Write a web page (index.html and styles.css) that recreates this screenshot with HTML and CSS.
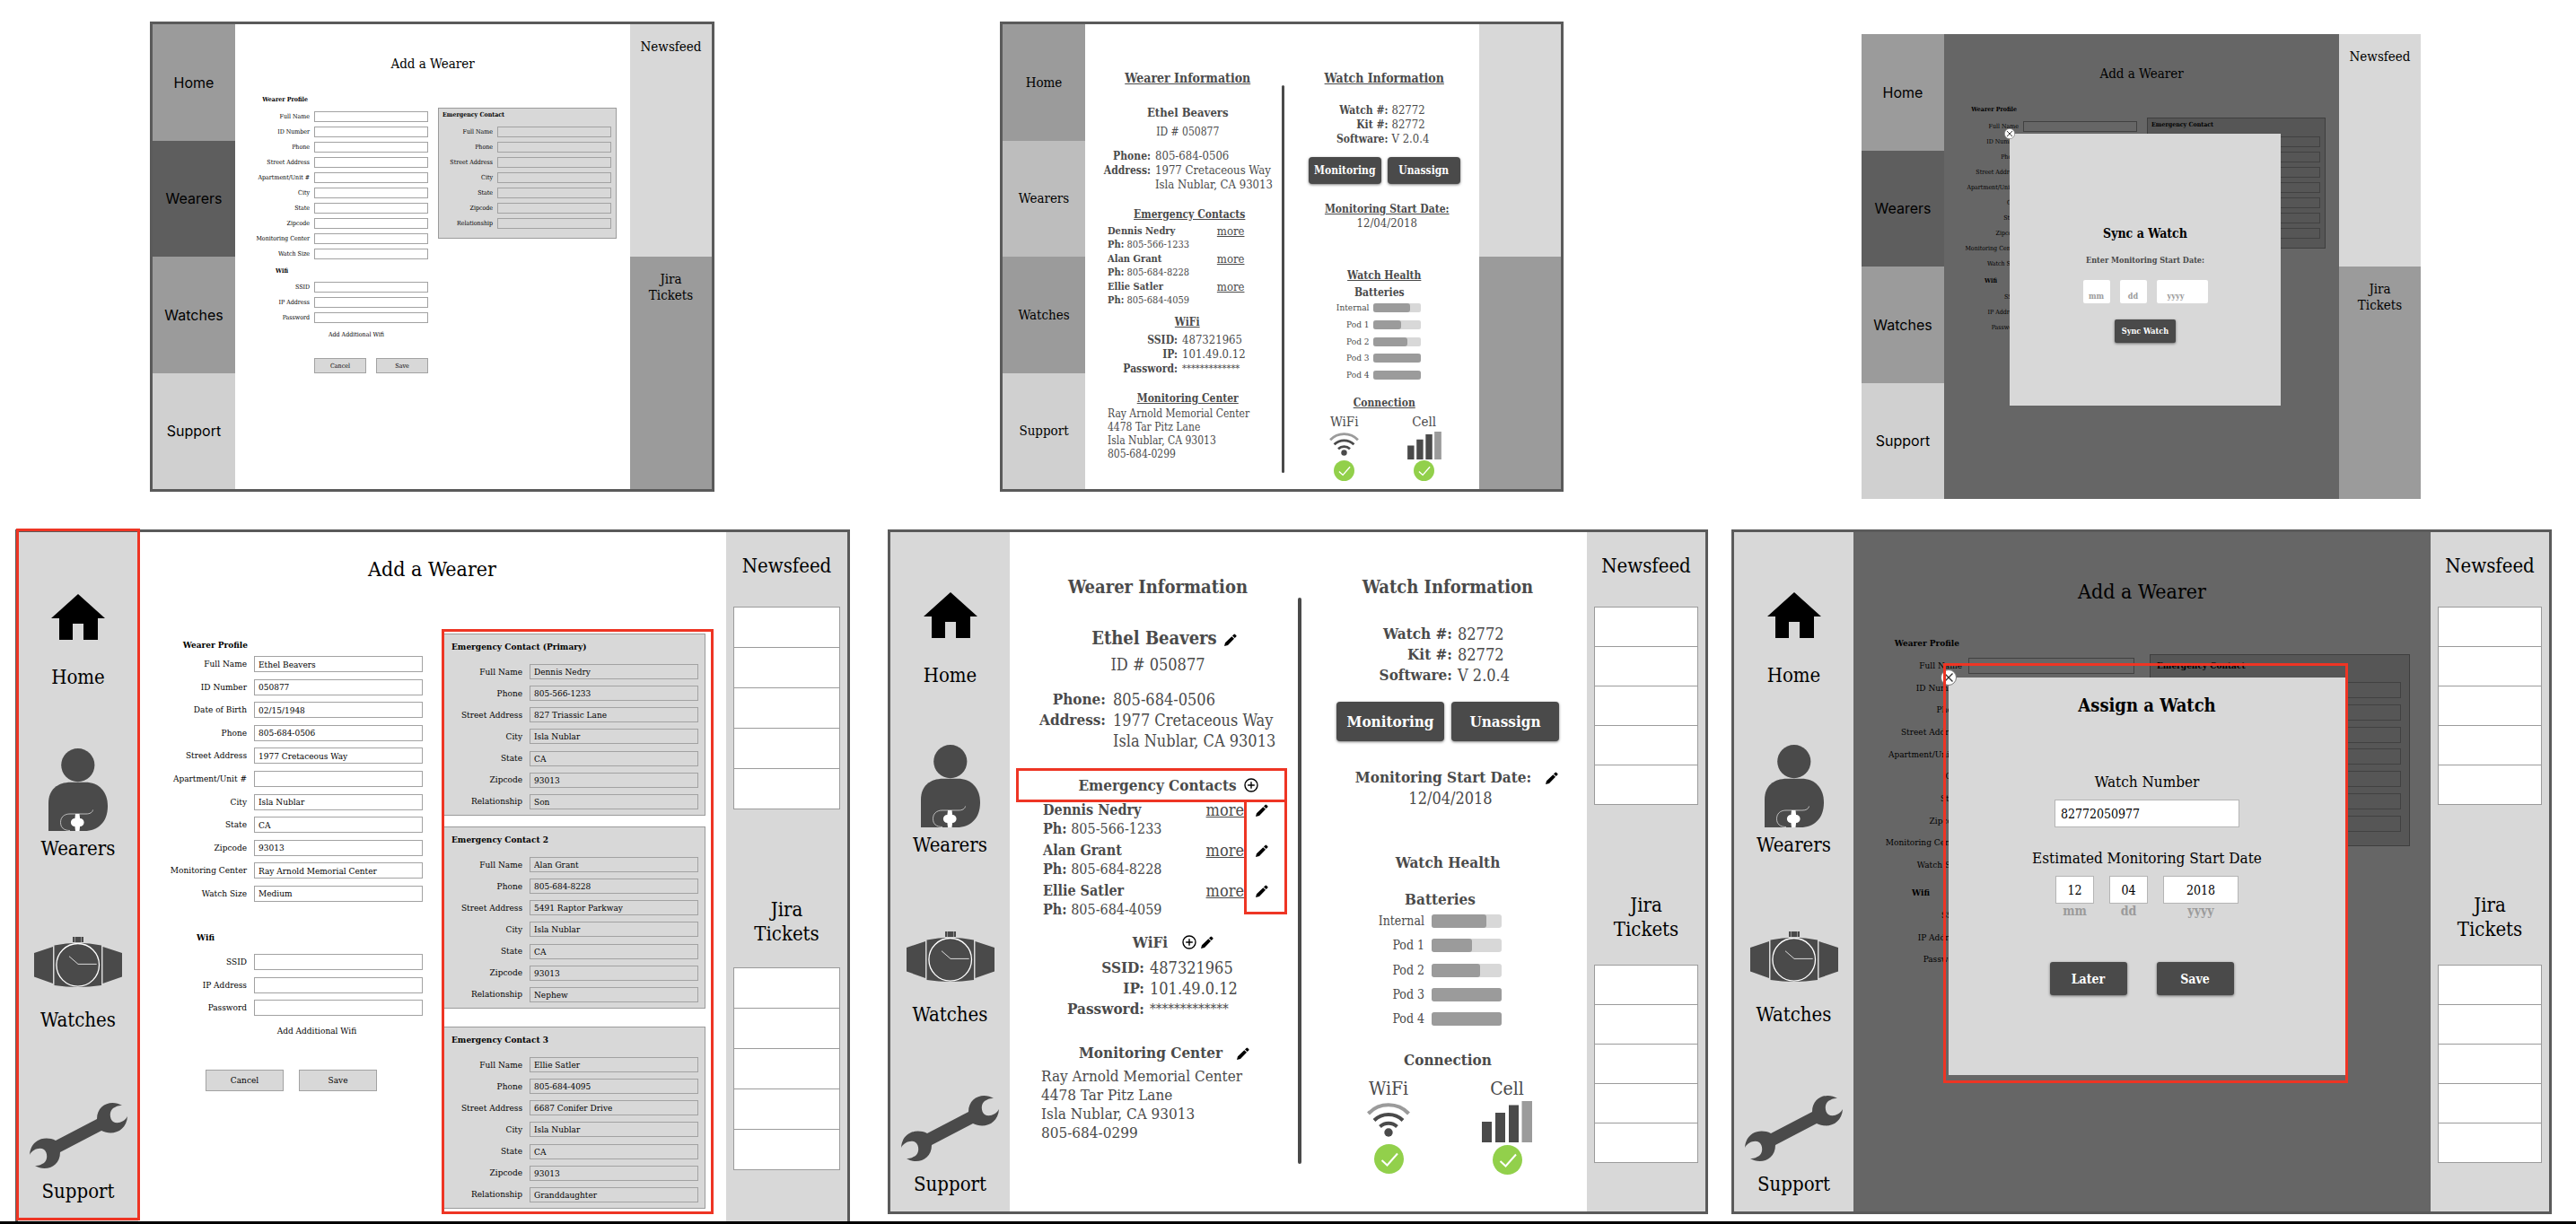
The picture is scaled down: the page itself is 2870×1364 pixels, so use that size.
FILE: index.html
```html
<!DOCTYPE html>
<html lang="en">
<head>
<meta charset="utf-8">
<title>Wearer screens</title>
<link rel="stylesheet" href="styles.css">
</head>
<body>
<svg class="sprite" aria-hidden="true">
  <symbol id="i-home" viewBox="0 0 60 51"><path d="M30 0 60 27H52V51H36V33H24V51H9V27H0Z" fill="#000"/></symbol>
  <symbol id="i-wearer" viewBox="0 0 66 92">
    <circle cx="32.8" cy="18.6" r="18.6"/>
    <path d="M0 92V61C0 46 10 37.8 25 37.8H41C56 37.8 66 48 66 64.500C66 82 55 92 40 92Z"/>
    <path d="M49.500 68.500C49 71.500 46 73 42 73H24C17 73 13.500 77 13.500 82.500S17 91.500 24 91.500" fill="none" stroke="#d8d8d8" stroke-width=".8"/>
    <path d="M30 73h4.500l.6 5a4.500 4.500 0 0 1 0 9l-.6 5H30l-.6-5a4.500 4.500 0 0 1 0-9Z" fill="#fff"/>
  </symbol>
  <symbol id="i-watch" viewBox="0 0 98 56">
    <path d="M0 18 21 11V52L0 44.500ZM98 18 76.500 11V52L98 44.500ZM22.500 9.500Q48.700 4 75 9.500V54Q48.700 58 22.500 54ZM43 0H55V6H43Z"/>
    <path d="M45.500 0V6M52.500 0V6" stroke="#d8d8d8" stroke-width=".5"/>
    <circle cx="48.700" cy="31.300" r="23.800" fill="none" stroke="#fff" stroke-width="1.300"/>
    <path d="M39 21.700 49 30.400H69.700" fill="none" stroke="#fff" stroke-width=".8"/>
  </symbol>
  <symbol id="i-wrench" viewBox="0 0 109 75"><path d="M103 4C92-3 75 2 75 19L29 43C17 37 1 42 0 59C3 53 11 50 16 53C21 57 20 67 14 69C11 71 8 71 6 71C17 78 34 73 34 56L80 32C92 38 108 33 109 16C106 22 98 25 93 22C88 18 89 8 95 6C98 4 101 4 103 4Z"/></symbol>
  <symbol id="i-pencil" viewBox="0 0 14 14"><path d="M0 14 1 10.200 8.300 3.200 11 5.800 4 12.900ZM9 2.500 10.600.9Q11.300.3 12 .9L13.300 2.100Q13.900 2.800 13.300 3.500L11.700 5.100Z" fill="#000"/></symbol>
  <symbol id="i-plus" viewBox="0 0 16 16"><path d="M8 4.200V11.800M4.200 8H11.800M15 8A7 7 0 1 1 1 8A7 7 0 1 1 15 8Z" fill="none" stroke="#000" stroke-width="1.400"/></symbol>
  <symbol id="i-close" viewBox="0 0 18 18"><circle cx="9" cy="9" r="8.500" fill="#fff" stroke="#777"/><path d="M4.500 4.500 13.500 13.500M13.500 4.500 4.500 13.500" stroke="#333" stroke-width="1.400"/></symbol>
  <symbol id="i-wifi" viewBox="0 0 48 38">
    <path d="M1.500 12A31 31 0 0 1 46.500 12" fill="none" stroke="#9b9b9b" stroke-width="4"/>
    <path d="M8 19.500A23 23 0 0 1 40 19.500M14.500 26.500A14 14 0 0 1 33.500 26.500" fill="none" stroke="#4a4a4a" stroke-width="4"/>
    <circle cx="24" cy="33" r="4.700"/>
  </symbol>
  <symbol id="i-cell" viewBox="0 0 56 46"><path d="M0 23H11V46H0ZM15 13H26V46H15ZM30 4.500H41V46H30Z"/><path d="M44.500 0H56V46H44.500Z" fill="#9b9b9b"/></symbol>
  <symbol id="i-check" viewBox="0 0 33 33"><circle cx="16.500" cy="16.500" r="16.500" fill="#92d04b"/><path d="M8.500 18 14.500 23.500 26 10.500" fill="none" stroke="#fff" stroke-width="2"/></symbol>
</svg>

<div class="row row-old">

  <!-- Add a wearer, first version -->
  <section class="screen screen-old s-a">
    <nav class="blocks sans">
      <a href="#">Home</a><a href="#" class="dark">Wearers</a><a href="#">Watches</a><a href="#" class="pale">Support</a>
    </nav>
    <main class="form-page compact">
      <h1>Add a Wearer</h1>
      <div class="columns">
        <form class="profile">
          <h2>Wearer Profile</h2>
          <div class="fields">
            <label><span>Full Name</span><input type="text"></label>
            <label><span>ID Number</span><input type="text"></label>
            <label><span>Phone</span><input type="text"></label>
            <label><span>Street Address</span><input type="text"></label>
            <label><span>Apartment/Unit #</span><input type="text"></label>
            <label><span>City</span><input type="text"></label>
            <label><span>State</span><input type="text"></label>
            <label><span>Zipcode</span><input type="text"></label>
            <label><span>Monitoring Center</span><input type="text"></label>
            <label><span>Watch Size</span><input type="text"></label>
          </div>
          <h2 class="wifi-title">Wifi</h2>
          <div class="fields wifi-fields">
            <label><span>SSID</span><input type="text"></label>
            <label><span>IP Address</span><input type="text"></label>
            <label><span>Password</span><input type="text"></label>
          </div>
          <a href="#" class="add-wifi">Add Additional Wifi</a>
          <div class="actions"><button type="button">Cancel</button><button type="button">Save</button></div>
        </form>
        <div class="contacts">
          <section class="panel">
            <h2>Emergency Contact</h2>
            <div class="fields">
              <label><span>Full Name</span><input type="text"></label>
              <label><span>Phone</span><input type="text"></label>
              <label><span>Street Address</span><input type="text"></label>
              <label><span>City</span><input type="text"></label>
              <label><span>State</span><input type="text"></label>
              <label><span>Zipcode</span><input type="text"></label>
              <label><span>Relationship</span><input type="text"></label>
            </div>
          </section>
        </div>
      </div>
    </main>
    <aside class="feed-old"><h2>Newsfeed</h2><h2>Jira<br>Tickets</h2></aside>
  </section>

  <!-- Wearer details, first version -->
  <section class="screen screen-old s-b">
    <nav class="blocks">
      <a href="#">Home</a><a href="#" class="mid">Wearers</a><a href="#">Watches</a><a href="#" class="pale">Support</a>
    </nav>
    <main class="details small">
      <section class="wearer">
        <h2>Wearer Information</h2>
        <p class="name">Ethel Beavers</p>
        <p class="id">ID # 050877</p>
        <dl class="pairs"><dt>Phone:</dt><dd>805-684-0506</dd><dt>Address:</dt><dd>1977 Cretaceous Way<br>Isla Nublar, CA 93013</dd></dl>
        <h3 class="t-contacts">Emergency Contacts</h3>
        <ul class="people">
          <li><p><b>Dennis Nedry</b><br><b>Ph:</b> 805-566-1233</p><a href="#">more</a></li>
          <li><p><b>Alan Grant</b><br><b>Ph:</b> 805-684-8228</p><a href="#">more</a></li>
          <li><p><b>Ellie Satler</b><br><b>Ph:</b> 805-684-4059</p><a href="#">more</a></li>
        </ul>
        <h3 class="t-wifi">WiFi</h3>
        <dl class="pairs network"><dt>SSID:</dt><dd>487321965</dd><dt>IP:</dt><dd>101.49.0.12</dd><dt>Password:</dt><dd class="secret">*************</dd></dl>
        <h3 class="t-center">Monitoring Center</h3>
        <p class="address">Ray Arnold Memorial Center<br>4478 Tar Pitz Lane<br>Isla Nublar, CA 93013<br>805-684-0299</p>
      </section>
      <div class="divider"></div>
      <section class="watch">
        <h2>Watch Information</h2>
        <dl class="pairs"><dt>Watch #:</dt><dd>82772</dd><dt>Kit #:</dt><dd>82772</dd><dt>Software:</dt><dd>V 2.0.4</dd></dl>
        <div class="buttons"><button type="button">Monitoring</button><button type="button">Unassign</button></div>
        <h3 class="t-start">Monitoring Start Date:</h3>
        <p class="date">12/04/2018</p>
        <h3 class="t-health">Watch Health</h3>
        <h4>Batteries</h4>
        <ul class="meters">
          <li><span>Internal</span><i><b style="width:77%"></b></i></li>
          <li><span>Pod 1</span><i><b style="width:58%"></b></i></li>
          <li><span>Pod 2</span><i><b style="width:70%"></b></i></li>
          <li><span>Pod 3</span><i><b style="width:100%"></b></i></li>
          <li><span>Pod 4</span><i><b style="width:100%"></b></i></li>
        </ul>
        <h3 class="t-connection">Connection</h3>
        <div class="signals">
          <div><span>WiFi</span><svg class="signal"><use href="#i-wifi"/></svg><svg class="check"><use href="#i-check"/></svg></div>
          <div><span>Cell</span><svg class="signal"><use href="#i-cell"/></svg><svg class="check"><use href="#i-check"/></svg></div>
        </div>
      </section>
    </main>
    <aside class="feed-old"><h2></h2><h2></h2></aside>
  </section>

  <!-- Sync a watch, first version -->
  <section class="screen screen-old s-c">
    <nav class="blocks sans">
      <a href="#">Home</a><a href="#" class="dark">Wearers</a><a href="#">Watches</a><a href="#" class="pale">Support</a>
    </nav>
    <main class="form-page compact">
      <h1>Add a Wearer</h1>
      <div class="columns">
        <form class="profile">
          <h2>Wearer Profile</h2>
          <div class="fields">
            <label><span>Full Name</span><input type="text"></label>
            <label><span>ID Number</span><input type="text"></label>
            <label><span>Phone</span><input type="text"></label>
            <label><span>Street Address</span><input type="text"></label>
            <label><span>Apartment/Unit #</span><input type="text"></label>
            <label><span>City</span><input type="text"></label>
            <label><span>State</span><input type="text"></label>
            <label><span>Zipcode</span><input type="text"></label>
            <label><span>Monitoring Center</span><input type="text"></label>
            <label><span>Watch Size</span><input type="text"></label>
          </div>
          <h2 class="wifi-title">Wifi</h2>
          <div class="fields wifi-fields">
            <label><span>SSID</span><input type="text"></label>
            <label><span>IP Address</span><input type="text"></label>
            <label><span>Password</span><input type="text"></label>
          </div>
        </form>
        <div class="contacts">
          <section class="panel">
            <h2>Emergency Contact</h2>
            <div class="fields">
              <label><span></span><input type="text" aria-label="Full Name"></label>
              <label><span></span><input type="text" aria-label="Phone"></label>
              <label><span></span><input type="text" aria-label="Street Address"></label>
              <label><span></span><input type="text" aria-label="City"></label>
              <label><span></span><input type="text" aria-label="State"></label>
              <label><span></span><input type="text" aria-label="Zipcode"></label>
              <label><span></span><input type="text" aria-label="Relationship"></label>
            </div>
          </section>
        </div>
      </div>
      <div class="scrim"></div>
      <div class="modal sync" role="dialog">
        <button type="button" class="close" aria-label="Close"><svg><use href="#i-close"/></svg></button>
        <h2>Sync a Watch</h2>
        <p>Enter Monitoring Start Date:</p>
        <div class="date-parts">
          <input type="text" placeholder="mm" aria-label="Month">
          <input type="text" placeholder="dd" aria-label="Day">
          <input type="text" class="year" placeholder="yyyy" aria-label="Year">
        </div>
        <div class="buttons"><button type="button">Sync Watch</button></div>
      </div>
    </main>
    <aside class="feed-old"><h2>Newsfeed</h2><h2>Jira<br>Tickets</h2></aside>
  </section>
</div>

<div class="row row-new">

  <!-- Add a wearer, revised -->
  <section class="screen screen-new s-d">
    <nav class="icons">
      <a href="#"><svg class="home"><use href="#i-home"/></svg>Home</a>
      <a href="#"><svg class="person"><use href="#i-wearer"/></svg>Wearers</a>
      <a href="#"><svg class="wristwatch"><use href="#i-watch"/></svg>Watches</a>
      <a href="#"><svg class="wrench"><use href="#i-wrench"/></svg>Support</a>
      <div class="mark mark-nav"></div>
    </nav>
    <main class="form-page">
      <h1>Add a Wearer</h1>
      <div class="columns">
        <form class="profile">
          <h2>Wearer Profile</h2>
          <div class="fields">
            <label><span>Full Name</span><input type="text" value="Ethel Beavers"></label>
            <label><span>ID Number</span><input type="text" value="050877"></label>
            <label><span>Date of Birth</span><input type="text" value="02/15/1948"></label>
            <label><span>Phone</span><input type="text" value="805-684-0506"></label>
            <label><span>Street Address</span><input type="text" value="1977 Cretaceous Way"></label>
            <label><span>Apartment/Unit #</span><input type="text"></label>
            <label><span>City</span><input type="text" value="Isla Nublar"></label>
            <label><span>State</span><input type="text" value="CA"></label>
            <label><span>Zipcode</span><input type="text" value="93013"></label>
            <label><span>Monitoring Center</span><input type="text" value="Ray Arnold Memorial Center"></label>
            <label><span>Watch Size</span><input type="text" value="Medium"></label>
          </div>
          <h2 class="wifi-title">Wifi</h2>
          <div class="fields wifi-fields">
            <label><span>SSID</span><input type="text"></label>
            <label><span>IP Address</span><input type="text"></label>
            <label><span>Password</span><input type="text"></label>
          </div>
          <a href="#" class="add-wifi">Add Additional Wifi</a>
          <div class="actions"><button type="button">Cancel</button><button type="button">Save</button></div>
        </form>
        <div class="contacts">
          <section class="panel">
            <h2>Emergency Contact (Primary)</h2>
            <div class="fields">
              <label><span>Full Name</span><input type="text" value="Dennis Nedry"></label>
              <label><span>Phone</span><input type="text" value="805-566-1233"></label>
              <label><span>Street Address</span><input type="text" value="827 Triassic Lane"></label>
              <label><span>City</span><input type="text" value="Isla Nublar"></label>
              <label><span>State</span><input type="text" value="CA"></label>
              <label><span>Zipcode</span><input type="text" value="93013"></label>
              <label><span>Relationship</span><input type="text" value="Son"></label>
            </div>
          </section>
          <section class="panel">
            <h2>Emergency Contact 2</h2>
            <div class="fields">
              <label><span>Full Name</span><input type="text" value="Alan Grant"></label>
              <label><span>Phone</span><input type="text" value="805-684-8228"></label>
              <label><span>Street Address</span><input type="text" value="5491 Raptor Parkway"></label>
              <label><span>City</span><input type="text" value="Isla Nublar"></label>
              <label><span>State</span><input type="text" value="CA"></label>
              <label><span>Zipcode</span><input type="text" value="93013"></label>
              <label><span>Relationship</span><input type="text" value="Nephew"></label>
            </div>
          </section>
          <section class="panel">
            <h2>Emergency Contact 3</h2>
            <div class="fields">
              <label><span>Full Name</span><input type="text" value="Ellie Satler"></label>
              <label><span>Phone</span><input type="text" value="805-684-4095"></label>
              <label><span>Street Address</span><input type="text" value="6687 Conifer Drive"></label>
              <label><span>City</span><input type="text" value="Isla Nublar"></label>
              <label><span>State</span><input type="text" value="CA"></label>
              <label><span>Zipcode</span><input type="text" value="93013"></label>
              <label><span>Relationship</span><input type="text" value="Granddaughter"></label>
            </div>
          </section>
          <div class="mark mark-contacts"></div>
        </div>
      </div>
    </main>
    <aside class="feed">
      <h2>Newsfeed</h2><ul><li></li><li></li><li></li><li></li><li></li></ul>
      <h2>Jira<br>Tickets</h2><ul><li></li><li></li><li></li><li></li><li></li></ul>
    </aside>
  </section>

  <!-- Wearer details, revised -->
  <section class="screen screen-new s-e">
    <nav class="icons">
      <a href="#"><svg class="home"><use href="#i-home"/></svg>Home</a>
      <a href="#"><svg class="person"><use href="#i-wearer"/></svg>Wearers</a>
      <a href="#"><svg class="wristwatch"><use href="#i-watch"/></svg>Watches</a>
      <a href="#"><svg class="wrench"><use href="#i-wrench"/></svg>Support</a>
    </nav>
    <main class="details">
      <section class="wearer">
        <h2>Wearer Information</h2>
        <p class="name">Ethel Beavers<span class="tools"><button type="button" aria-label="Edit name"><svg><use href="#i-pencil"/></svg></button></span></p>
        <p class="id">ID # 050877</p>
        <dl class="pairs"><dt>Phone:</dt><dd>805-684-0506</dd><dt>Address:</dt><dd>1977 Cretaceous Way<br>Isla Nublar, CA 93013</dd></dl>
        <h3 class="t-contacts">Emergency Contacts<span class="tools"><button type="button" aria-label="Add contact"><svg class="plus"><use href="#i-plus"/></svg></button></span><span class="mark mark-title"></span></h3>
        <ul class="people">
          <li><p><b>Dennis Nedry</b><br><b>Ph:</b> 805-566-1233</p><a href="#">more</a><button type="button" aria-label="Edit Dennis Nedry"><svg><use href="#i-pencil"/></svg></button></li>
          <li><p><b>Alan Grant</b><br><b>Ph:</b> 805-684-8228</p><a href="#">more</a><button type="button" aria-label="Edit Alan Grant"><svg><use href="#i-pencil"/></svg></button></li>
          <li><p><b>Ellie Satler</b><br><b>Ph:</b> 805-684-4059</p><a href="#">more</a><button type="button" aria-label="Edit Ellie Satler"><svg><use href="#i-pencil"/></svg></button></li>
          <li class="mark mark-edit"></li>
        </ul>
        <h3 class="t-wifi">WiFi<span class="tools wide"><button type="button" aria-label="Add network"><svg class="plus"><use href="#i-plus"/></svg></button><button type="button" aria-label="Edit network"><svg><use href="#i-pencil"/></svg></button></span></h3>
        <dl class="pairs network"><dt>SSID:</dt><dd>487321965</dd><dt>IP:</dt><dd>101.49.0.12</dd><dt>Password:</dt><dd class="secret">*************</dd></dl>
        <h3 class="t-center">Monitoring Center<span class="tools wide"><button type="button" aria-label="Edit center"><svg><use href="#i-pencil"/></svg></button></span></h3>
        <p class="address">Ray Arnold Memorial Center<br>4478 Tar Pitz Lane<br>Isla Nublar, CA 93013<br>805-684-0299</p>
      </section>
      <div class="divider"></div>
      <section class="watch">
        <h2>Watch Information</h2>
        <dl class="pairs"><dt>Watch #:</dt><dd>82772</dd><dt>Kit #:</dt><dd>82772</dd><dt>Software:</dt><dd>V 2.0.4</dd></dl>
        <div class="buttons"><button type="button">Monitoring</button><button type="button">Unassign</button></div>
        <h3 class="t-start">Monitoring Start Date:<span class="tools wide"><button type="button" aria-label="Edit start date"><svg><use href="#i-pencil"/></svg></button></span></h3>
        <p class="date">12/04/2018</p>
        <h3 class="t-health">Watch Health</h3>
        <h4>Batteries</h4>
        <ul class="meters">
          <li><span>Internal</span><i><b style="width:78%"></b></i></li>
          <li><span>Pod 1</span><i><b style="width:58%"></b></i></li>
          <li><span>Pod 2</span><i><b style="width:69%"></b></i></li>
          <li><span>Pod 3</span><i><b style="width:100%"></b></i></li>
          <li><span>Pod 4</span><i><b style="width:100%"></b></i></li>
        </ul>
        <h3 class="t-connection">Connection</h3>
        <div class="signals">
          <div><span>WiFi</span><svg class="signal"><use href="#i-wifi"/></svg><svg class="check"><use href="#i-check"/></svg></div>
          <div><span>Cell</span><svg class="signal"><use href="#i-cell"/></svg><svg class="check"><use href="#i-check"/></svg></div>
        </div>
      </section>
    </main>
    <aside class="feed">
      <h2>Newsfeed</h2><ul><li></li><li></li><li></li><li></li><li></li></ul>
      <h2>Jira<br>Tickets</h2><ul><li></li><li></li><li></li><li></li><li></li></ul>
    </aside>
  </section>

  <!-- Assign a watch, revised -->
  <section class="screen screen-new s-f">
    <nav class="icons">
      <a href="#"><svg class="home"><use href="#i-home"/></svg>Home</a>
      <a href="#"><svg class="person"><use href="#i-wearer"/></svg>Wearers</a>
      <a href="#"><svg class="wristwatch"><use href="#i-watch"/></svg>Watches</a>
      <a href="#"><svg class="wrench"><use href="#i-wrench"/></svg>Support</a>
    </nav>
    <main class="form-page backdrop">
      <h1>Add a Wearer</h1>
      <div class="columns">
        <form class="profile">
          <h2>Wearer Profile</h2>
          <div class="fields">
            <label><span>Full Name</span><input type="text"></label>
            <label><span>ID Number</span><input type="text"></label>
            <label><span>Phone</span><input type="text"></label>
            <label><span>Street Address</span><input type="text"></label>
            <label><span>Apartment/Unit #</span><input type="text"></label>
            <label><span>City</span><input type="text"></label>
            <label><span>State</span><input type="text"></label>
            <label><span>Zipcode</span><input type="text"></label>
            <label><span>Monitoring Center</span><input type="text"></label>
            <label><span>Watch Size</span><input type="text"></label>
          </div>
          <h2 class="wifi-title">Wifi</h2>
          <div class="fields wifi-fields">
            <label><span>SSID</span><input type="text"></label>
            <label><span>IP Address</span><input type="text"></label>
            <label><span>Password</span><input type="text"></label>
          </div>
        </form>
        <div class="contacts">
          <section class="panel">
            <h2>Emergency Contact</h2>
            <div class="fields">
              <label><span></span><input type="text" aria-label="Full Name"></label>
              <label><span></span><input type="text" aria-label="Phone"></label>
              <label><span></span><input type="text" aria-label="Street Address"></label>
              <label><span></span><input type="text" aria-label="City"></label>
              <label><span></span><input type="text" aria-label="State"></label>
              <label><span></span><input type="text" aria-label="Zipcode"></label>
              <label><span></span><input type="text" aria-label="Relationship"></label>
            </div>
          </section>
        </div>
      </div>
      <div class="scrim"></div>
      <div class="modal assign" role="dialog">
        <button type="button" class="close" aria-label="Close"><svg><use href="#i-close"/></svg></button>
        <h2>Assign a Watch</h2>
        <label for="watch-number">Watch Number</label>
        <input type="text" id="watch-number" value="82772050977">
        <p>Estimated Monitoring Start Date</p>
        <div class="date-parts">
          <label><input type="text" value="12">mm</label>
          <label><input type="text" value="04">dd</label>
          <label><input type="text" class="year" value="2018">yyyy</label>
        </div>
        <div class="buttons"><button type="button">Later</button><button type="button">Save</button></div>
      </div>
      <div class="mark mark-modal"></div>
    </main>
    <aside class="feed">
      <h2>Newsfeed</h2><ul><li></li><li></li><li></li><li></li><li></li></ul>
      <h2>Jira<br>Tickets</h2><ul><li></li><li></li><li></li><li></li><li></li></ul>
    </aside>
  </section>
</div>
<hr class="page-end">
</body>
</html>
```
FILE: styles.css
```css
* { box-sizing: border-box; }

body {
  margin: 0;
  padding-top: 24px;
  background: #fff;
  color: #000;
  font-family: "DejaVu Serif Condensed", "DejaVu Serif", serif;
}

h1, h2, h3, h4, p, ul, dl, dd { margin: 0; padding: 0; font-weight: normal; }
ul { list-style: none; }
a { color: inherit; text-decoration: none; }
input, button { margin: 0; padding: 0; border: 0; border-radius: 0; font: inherit; color: inherit; min-width: 0; }
button { background: none; }
svg { display: block; fill: #4a4a4a; }
.sprite { position: absolute; width: 0; height: 0; }

/* Canvas rows */
.row { display: grid; align-items: start; }
.row-old { grid-template-columns: 167fr 629fr 318fr 628fr 332fr 623fr 173fr; margin-bottom: 34px; }
.row-new { grid-template-columns: 17fr 930fr 42fr 914fr 26fr 914fr 27fr; }
.s-a, .s-d { grid-column: 2; }
.s-b, .s-e { grid-column: 4; }
.s-c, .s-f { grid-column: 6; }
.page-end { height: 3px; margin: 0; border: 0; background: #000; }

.screen { display: grid; border: 3px solid #5a5a5a; background: #fff; }
.screen-old { grid-template-columns: 92px 1fr 91px; min-height: 524px; }
.s-c { margin-top: 14px; min-height: 518px; border: 0; }
.screen-new { grid-template-columns: 133px 1fr 132px; min-height: 763px; }
.s-d { grid-template-columns: 134px 1fr 135px; min-height: 771px; border-bottom: 0; }

/* Block navigation */
.blocks { display: grid; grid-auto-rows: 1fr; font-size: 15px; }
.blocks a { display: flex; align-items: center; justify-content: center; background: #9b9b9b; }
.blocks .dark { background: #5e5e5e; }
.blocks .mid { background: #bdbdbd; }
.blocks .pale { background: #d0d0d0; }
.sans { font-family: Inter, sans-serif; font-size: 16px; }

.feed-old { display: grid; grid-auto-rows: 1fr; text-align: center; font-size: 15px; line-height: 18px; }
.feed-old h2 { font-size: 15px; padding-top: 16px; background: #d8d8d8; }
.feed-old h2 + h2 { background: #9b9b9b; }

/* Icon navigation */
.icons { --step: 189px; position: relative; background: #d8d8d8; font-size: 22px; line-height: 28px; }
.icons a { display: flex; flex-direction: column; align-items: center; justify-content: flex-end; height: var(--step); }
.icons a:first-child { height: calc(var(--step) - 15px); }
.icons .home { width: 60px; height: 51px; margin-bottom: 28px; }
.icons .person { width: 66px; height: 92px; margin-bottom: 6px; }
.icons .wristwatch { width: 98px; height: 56px; margin-bottom: 23px; }
.icons .wrench { width: 109px; height: 75px; margin-bottom: 11px; }
.s-d .icons { --step: 191px; }

.feed { --cell: 44px; padding: 24px 8px 0; background: #d8d8d8; text-align: center; }
.feed h2 { font-size: 22px; line-height: 27px; }
.feed ul { margin-top: 32px; border: 1px solid #9b9b9b; border-bottom: 0; }
.feed ul + h2 { margin-top: 98px; }
.feed h2 + ul ~ ul { margin-top: 26px; }
.feed li { height: var(--cell); border-bottom: 1px solid #9b9b9b; background: #fff; }
.s-d .feed { --cell: 45px; }
.s-d .feed h2 + ul ~ ul { margin-top: 24px; }

/* Review marks */
.mark { position: absolute; border: 3px solid #ee3524; pointer-events: none; }
.mark-nav { inset: -4px -2px 1px -2px; }
.mark-contacts { inset: -5px -9px -6px 0; }
.mark-title { inset: -7px 12px -7px 7px; }
.mark-edit { top: -1px; right: 12px; bottom: 5px; width: 48px; }
.mark-modal { inset: 146px 92px auto 100px; height: 468px; }

/* Add a wearer */
.form-page {
  --input-w: 188px; --input-h: 18px; --gap: 8px;
  position: relative;
  padding-top: 27px;
  font-size: 10px;
  line-height: 12px;
}
.form-page h1 { font-size: 23px; line-height: 28px; text-align: center; }
.form-page h2 { font-size: 10px; font-weight: bold; line-height: 12px; }
.columns { display: grid; grid-template-columns: 1fr 294px; column-gap: 21px; padding-right: 23px; align-items: start; }
.profile { padding-top: 65px; }
.profile h2 { padding-right: 195px; text-align: right; }
.profile .wifi-title { margin-top: 34px; padding-right: 232px; }
.fields { display: grid; align-content: space-between; height: 274px; margin-top: 6px; }
.fields label { display: grid; grid-template-columns: 1fr var(--input-w); column-gap: var(--gap); align-items: center; text-align: right; white-space: nowrap; }
.fields input { width: 100%; height: var(--input-h); padding: 0 4px; border: 1px solid #a2a2a2; background: #fff; }
.wifi-fields { height: 69px; margin-top: 12px; }
.add-wifi { display: block; margin-top: 11px; padding-left: 81px; text-align: center; }
.actions { display: flex; justify-content: flex-end; gap: 17px; margin-top: 37px; padding-right: 51px; }
.actions button { width: 87px; height: 24px; border: 1px solid #a2a2a2; background: #d8d8d8; }
.contacts { position: relative; margin-top: 58px; }
.panel { --input-h: 17px; padding: 8px 7px 6px 10px; border: 1px solid #9b9b9b; background: #d8d8d8; }
.panel + .panel { margin-top: 12px; }
.panel + .panel + .panel { margin-top: 20px; }
.panel .fields { height: 162px; margin-top: 13px; }
.panel input { background: transparent; }

.compact { --input-w: 127px; --input-h: 12px; --gap: 5px; padding-top: 34px; font-size: 7px; line-height: 8px; }
.compact h1 { font-size: 15px; line-height: 20px; }
.compact h2 { font-size: 7px; line-height: 8px; }
.compact .columns { grid-template-columns: 1fr 199px; column-gap: 11px; padding-right: 15px; }
.compact .profile { padding-top: 26px; }
.compact .profile h2 { padding-right: 134px; }
.compact .profile .wifi-title { margin-top: 9px; padding-right: 156px; }
.compact .fields { height: 165px; margin-top: 9px; }
.compact .wifi-fields { height: 46px; margin-top: 8px; }
.compact .add-wifi { margin-top: 9px; padding-left: 55px; }
.compact .actions { gap: 11px; margin-top: 22px; padding-right: 0; }
.compact .actions button { width: 58px; height: 17px; }
.compact .contacts { margin-top: 39px; }
.compact .panel { --input-h: 12px; padding: 3px 5px 10px 4px; }
.compact .panel .fields { height: 114px; margin-top: 9px; }

.backdrop { --input-w: 185px; --gap: 7px; padding-top: 52px; }
.backdrop .columns { grid-template-columns: 1fr 290px; column-gap: 17px; }
.backdrop .profile { padding-top: 38px; }
.backdrop .fields { height: 240px; margin-top: 10px; }
.backdrop .profile .wifi-title { margin-top: 16px; padding-right: 228px; }
.backdrop .wifi-fields { height: 67px; margin-top: 10px; }
.backdrop .contacts { margin-top: 56px; }
.backdrop .panel { --input-h: 18px; padding: 6px 9px 15px 7px; }
.backdrop .panel .fields { height: 167px; margin-top: 12px; }

/* Dialogs */
.scrim { position: absolute; inset: 0; background: rgba(0, 0, 0, .6); }
.modal { position: absolute; display: flex; flex-direction: column; align-items: center; background: #d8d8d8; }
.close { position: absolute; }
.close svg { width: 100%; height: 100%; }
.date-parts { display: flex; }
.date-parts input { background: #fff; text-align: center; }
.buttons { display: flex; justify-content: center; }
.buttons button { border-radius: 4px; background: #4a4a4a; color: #fff; font-weight: bold; box-shadow: 0 1px 3px rgba(0, 0, 0, .5); }

.sync { inset: 111px 65px auto 73px; height: 303px; padding-top: 101px; }
.sync .close { left: -6px; top: -6px; width: 12px; height: 12px; }
.sync h2 { font-size: 14px; line-height: 20px; }
.sync p { margin-top: 14px; color: #4a4a4a; font-size: 9px; font-weight: bold; line-height: 12px; }
.sync .date-parts { gap: 11px; margin-top: 16px; }
.sync .date-parts input { width: 30px; height: 26px; padding-top: 9px; border-radius: 2px; font-size: 9px; font-weight: bold; }
.sync .date-parts .year { width: 57px; padding-right: 14px; }
.sync ::placeholder { color: #9b9b9b; opacity: 1; }
.sync .buttons { margin-top: 18px; }
.sync .buttons button { width: 68px; height: 26px; border-radius: 2px; font-size: 9px; }

.assign { inset: 162px 95px auto 106px; height: 443px; padding-top: 17px; font-size: 17px; line-height: 24px; }
.assign .close { left: -9px; top: -9px; width: 18px; height: 18px; }
.assign h2 { margin-bottom: 59px; font-size: 20px; line-height: 28px; }
.assign > input { width: 206px; margin-top: 8px; padding: 0 6px; }
.assign input { height: 31px; border: 1px solid #b5b5b5; background: #fff; font-size: 14px; }
.assign p { margin-top: 22px; }
.assign .date-parts { gap: 17px; margin-top: 8px; }
.assign .date-parts label { display: flex; flex-direction: column; align-items: center; color: #9b9b9b; font-size: 14px; font-weight: bold; line-height: 16px; }
.assign .date-parts input { width: 43px; color: #000; font-weight: normal; }
.assign .date-parts .year { width: 84px; }
.assign .buttons { gap: 33px; margin-top: 49px; padding-right: 12px; }
.assign .buttons button { width: 86px; height: 37px; border-radius: 3px; font-size: 14px; }

/* Wearer and watch details */
.details { display: grid; grid-template-columns: 321fr 4px 318fr; color: #4a4a4a; font-size: 18px; line-height: 23px; text-align: center; white-space: nowrap; }
.details h2 { padding-top: 47px; font-size: 20px; font-weight: bold; line-height: 28px; }
.details h3, .details h4 { font-size: 17px; font-weight: bold; line-height: 24px; }
.wearer > h2, .wearer > h3, .name, .id { padding-left: 9px; }
.wearer > h3 { position: relative; }
.divider { margin: 73px 0 53px; border-radius: 2px; background: #4a4a4a; }
.name { margin-top: 29px; font-size: 20px; font-weight: bold; line-height: 28px; }
.id { margin-top: 4px; line-height: 24px; }
.pairs { display: grid; grid-template-columns: 107px 1fr; column-gap: 8px; margin-top: 15px; text-align: left; }
.pairs dt { font-size: 17px; font-weight: bold; text-align: right; }
.network { grid-template-columns: 150px 1fr; column-gap: 6px; margin-top: 5px; }
.secret { font-size: 15px; }
.tools { display: inline-flex; gap: 5px; width: 0; margin-left: 8px; vertical-align: -2px; }
.tools.wide { margin-left: 16px; }
.tools button { flex: none; }
.tools svg, .people svg { width: 14px; height: 14px; }
.tools .plus { width: 16px; height: 16px; }
.wearer > .t-contacts { margin-top: 26px; padding-left: 16px; }
.wearer > .t-wifi { margin-top: 14px; padding-left: 8px; }
.t-center { margin-top: 25px; }
.people { position: relative; display: grid; row-gap: 3px; margin-top: 5px; padding: 0 12px 0 37px; font-size: 16px; line-height: 21px; text-align: left; }
.people li:not(.mark) { display: grid; grid-template-columns: 1fr auto 48px; align-items: start; }
.people a { font-size: 18px; text-decoration: underline; }
.people button { justify-self: center; padding: 4px 8px 0 0; }
.address { margin-top: 4px; padding-left: 35px; font-size: 17px; line-height: 21px; text-align: left; }

.watch { padding-left: 8px; }
.watch .pairs { grid-template-columns: 160px 1fr; column-gap: 6px; margin-top: 27px; }
.details .buttons { gap: 8px; margin-top: 18px; }
.details .buttons button { width: 120px; height: 44px; font-size: 17px; }
.t-start { margin-top: 28px; }
.t-start, .date { padding-left: 6px; }
.t-health { margin-top: 48px; }
.details h4 { margin-top: 17px; padding-right: 17px; }
.meters { display: grid; align-content: space-between; height: 124px; margin-top: 5px; font-size: 14px; line-height: 15px; }
.meters li { display: grid; grid-template-columns: 129px 78px; column-gap: 8px; text-align: right; }
.meters i { height: 15px; border-radius: 3px; background: #d8d8d8; }
.meters b { display: block; height: 100%; border-radius: 3px; background: #9b9b9b; }
.t-connection { margin-top: 26px; }
.signals { display: flex; justify-content: center; gap: 76px; margin-top: 8px; font-size: 21px; line-height: 24px; }
.signals div { display: flex; flex-direction: column; align-items: center; width: 56px; }
.signal { width: 56px; height: 46px; margin-top: 2px; }
.signals div:first-child .signal { width: 48px; height: 38px; margin: 4px 0 5px; }
.check { width: 33px; height: 33px; margin-top: 3px; }

/* First version at its smaller size */
.small { grid-template-columns: 220fr 3px 217fr; font-size: 13px; line-height: 16px; }
.small h2 { padding-top: 50px; font-size: 14px; line-height: 20px; text-decoration: underline; }
.small h3, .small h4 { font-size: 12px; line-height: 16px; }
.small h3 { text-decoration: underline; }
.small .divider { margin: 68px 0 18px; }
.small .name { margin-top: 19px; font-size: 13px; line-height: 20px; }
.small .id { margin-top: 3px; font-size: 12px; line-height: 16px; }
.small .pairs { grid-template-columns: 73px 1fr; column-gap: 5px; margin-top: 11px; }
.small .pairs dt { font-size: 12px; }
.small .network { grid-template-columns: 103px 1fr; margin-top: 4px; }
.small .secret { font-size: 11px; }
.small .t-contacts { margin-top: 17px; padding-left: 13px; }
.small .t-wifi { margin-top: 9px; }
.small .t-center { margin-top: 17px; }
.small .people { row-gap: 1px; margin-top: 3px; padding: 0 42px 0 25px; font-size: 11px; line-height: 15px; }
.small .people li:not(.mark) { grid-template-columns: 1fr auto; }
.small .people a { font-size: 13px; }
.small .address { margin-top: 2px; padding-left: 25px; font-size: 12px; line-height: 15px; }
.small .watch { padding-left: 5px; }
.small .watch .pairs { grid-template-columns: 110px 1fr; column-gap: 4px; margin-top: 18px; }
.small .buttons { gap: 7px; margin-top: 12px; }
.small .buttons button { width: 81px; height: 30px; font-size: 12px; }
.small .t-start { margin-top: 20px; }
.small .t-health { margin-top: 42px; }
.small h4 { margin-top: 3px; padding-right: 11px; }
.small .meters { height: 85px; margin-top: 4px; font-size: 10px; line-height: 10px; }
.small .meters li { grid-template-columns: 89px 53px; column-gap: 5px; }
.small .meters i { height: 10px; border-radius: 2px; }
.small .t-connection { margin-top: 18px; }
.small .signals { gap: 51px; margin-top: 5px; font-size: 15px; line-height: 17px; }
.small .signals div { width: 38px; }
.small .signal { width: 38px; height: 31px; margin-top: 2px; }
.small .signals div:first-child .signal { width: 33px; height: 26px; margin: 3px 0 4px; }
.small .check { width: 23px; height: 23px; margin-top: 1px; }
```
